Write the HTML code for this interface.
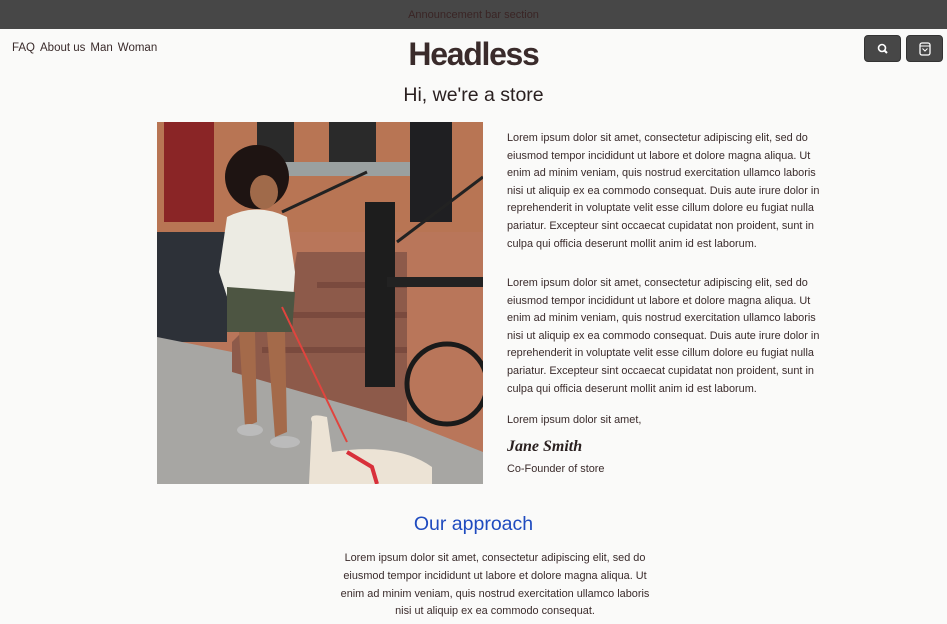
<!DOCTYPE html>
<html><head><meta charset="utf-8"><style>
*{margin:0;padding:0;box-sizing:border-box}
body{width:947px;height:624px;overflow:hidden;background:#fafaf9;font-family:"Segoe UI","Liberation Sans",sans-serif;color:#3a2b2b;position:relative}
.ann{height:29px;background:#474747;color:#3a2525;font-size:11px;text-align:center;line-height:31px}
.nav{position:absolute;left:12px;top:42px;font-size:11.5px;color:#3a2b2b}
.nav span{margin-right:5px}
.logo{position:absolute;left:0;right:0;top:36px;text-align:center;font-size:32px;font-weight:bold;letter-spacing:-1.3px;color:#3a2b2b}
.btn{position:absolute;top:35px;width:37px;height:27px;background:#474747;border-radius:4px;border:1px solid #333}
h2{position:absolute;left:0;right:0;top:84px;text-align:center;font-size:19.5px;font-weight:normal;color:#2a2020}
.img{position:absolute;left:157px;top:122px;width:326px;height:362px;overflow:hidden}
.txt{position:absolute;left:507px;width:326px;font-size:10.9px;line-height:17.6px;color:#3a2b2b}
.sig{position:absolute;left:507px;top:438px;font-family:"Liberation Serif",serif;font-style:italic;font-weight:bold;font-size:16px;color:#2a2020}
h3{position:absolute;left:0;right:0;top:513px;text-align:center;font-size:19.5px;font-weight:normal;color:#1f4bbf}
.ap{position:absolute;left:340px;width:310px;top:550px;text-align:center;font-size:10.9px;line-height:17.8px;color:#3a2b2b}
</style></head><body>
<div class="ann">Announcement bar section</div>
<div class="nav"><span>FAQ</span><span>About us</span><span>Man</span><span>Woman</span></div>
<div class="logo">Headless</div>
<div class="btn" style="left:864px"><svg width="37" height="27"><circle cx="17" cy="12" r="3.5" fill="none" stroke="#fff" stroke-width="1.6"/><line x1="19.5" y1="14.5" x2="22" y2="17" stroke="#fff" stroke-width="2"/></svg></div>
<div class="btn" style="left:906px"><svg width="37" height="27"><rect x="13" y="7" width="10" height="12" rx="2" fill="none" stroke="#fff" stroke-width="1.3"/><line x1="13" y1="10" x2="23" y2="10" stroke="#fff" stroke-width="1"/><path d="M15.5 12.5 L18 15 L20.5 12.5" fill="none" stroke="#fff" stroke-width="1"/></svg></div>
<h2>Hi, we're a store</h2>
<div class="img"><svg width="326" height="362" viewBox="0 0 326 362">
<rect width="326" height="362" fill="#b9765a"/>
<rect x="0" y="0" width="326" height="110" fill="#b87554"/>
<rect x="7" y="0" width="50" height="100" fill="#8a2526"/>
<rect x="100" y="0" width="37" height="40" fill="#2a2a2a"/>
<rect x="172" y="0" width="47" height="40" fill="#2a2a2a"/>
<rect x="253" y="0" width="42" height="100" fill="#1f1f22"/>
<rect x="128" y="40" width="125" height="14" fill="#9aa0a0"/>
<rect x="0" y="110" width="70" height="110" fill="#2d3138"/>
<polygon points="75,230 240,230 250,300 326,330 326,362 0,362 0,215" fill="#a7a6a3"/>
<polygon points="140,130 250,130 250,300 75,250 75,220 135,160" fill="#8d5a4a"/>
<g fill="#7a4a3e"><rect x="160" y="160" width="90" height="6"/><rect x="135" y="190" width="115" height="6"/><rect x="105" y="225" width="145" height="6"/></g>
<rect x="208" y="80" width="30" height="185" fill="#1d1d1d"/>
<rect x="230" y="155" width="96" height="10" fill="#222"/>
<circle cx="290" cy="262" r="40" fill="none" stroke="#1a1a1a" stroke-width="5"/>
<path d="M125 90 L210 50 M240 120 L326 55" stroke="#222" stroke-width="3"/>
<ellipse cx="100" cy="55" rx="32" ry="32" fill="#1e1412"/>
<ellipse cx="107" cy="70" rx="14" ry="17" fill="#a06a4a"/>
<path d="M70 95 Q100 80 130 95 L138 150 L135 195 L75 190 L62 150 Z" fill="#ecebe3"/>
<path d="M70 165 L138 170 L135 210 L70 210 Z" fill="#4d5542"/>
<path d="M82 210 L98 210 L100 300 L88 305 Z M110 210 L128 210 L130 310 L118 315 Z" fill="#a46a4a"/>
<ellipse cx="93" cy="308" rx="13" ry="6" fill="#bbb"/>
<ellipse cx="128" cy="320" rx="15" ry="6" fill="#bbb"/>
<path d="M125 185 L190 320" stroke="#e0443e" stroke-width="2"/>
<path d="M155 300 Q150 290 170 295 L175 330 Q240 320 275 345 L275 362 L152 362 Z" fill="#ece3d5"/>
<path d="M190 330 L215 345 L220 362" stroke="#d8303a" stroke-width="4" fill="none"/>
</svg></div>
<div class="txt" style="top:130px">Lorem ipsum dolor sit amet, consectetur adipiscing elit, sed do eiusmod tempor incididunt ut labore et dolore magna aliqua. Ut enim ad minim veniam, quis nostrud exercitation ullamco laboris nisi ut aliquip ex ea commodo consequat. Duis aute irure dolor in reprehenderit in voluptate velit esse cillum dolore eu fugiat nulla pariatur. Excepteur sint occaecat cupidatat non proident, sunt in culpa qui officia deserunt mollit anim id est laborum.</div>
<div class="txt" style="top:275px">Lorem ipsum dolor sit amet, consectetur adipiscing elit, sed do eiusmod tempor incididunt ut labore et dolore magna aliqua. Ut enim ad minim veniam, quis nostrud exercitation ullamco laboris nisi ut aliquip ex ea commodo consequat. Duis aute irure dolor in reprehenderit in voluptate velit esse cillum dolore eu fugiat nulla pariatur. Excepteur sint occaecat cupidatat non proident, sunt in culpa qui officia deserunt mollit anim id est laborum.</div>
<div class="txt" style="top:412px">Lorem ipsum dolor sit amet,</div>
<div class="sig">Jane Smith</div>
<div class="txt" style="top:461px">Co-Founder of store</div>
<h3>Our approach</h3>
<div class="ap">Lorem ipsum dolor sit amet, consectetur adipiscing elit, sed do eiusmod tempor incididunt ut labore et dolore magna aliqua. Ut enim ad minim veniam, quis nostrud exercitation ullamco laboris nisi ut aliquip ex ea commodo consequat.</div>
</body></html>
